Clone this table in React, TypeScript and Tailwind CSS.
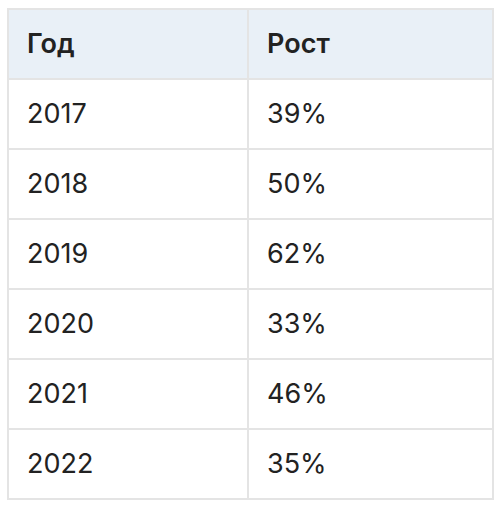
import React from 'react';

const rows = [
  ['2017', '39%'],
  ['2018', '50%'],
  ['2019', '62%'],
  ['2020', '33%'],
  ['2021', '46%'],
  ['2022', '35%'],
];

export default function App() {
  return (
    <div className="min-h-screen bg-white pl-[7px] pt-[8px] font-['Inter',sans-serif] text-[27px] text-[#222222]">
      <table className="w-[487px] border-collapse border-2 border-[#e4e4e4]">
        <thead>
          <tr className="bg-[#e9f0f7]">
            <th className="h-[70px] w-[240px] border-2 border-[#e4e4e4] pl-[18px] text-left font-semibold">Год</th>
            <th className="h-[70px] border-2 border-[#e4e4e4] pl-[18px] text-left font-semibold">Рост</th>
          </tr>
        </thead>
        <tbody>
          {rows.map(([year, growth]) => (
            <tr key={year}>
              <td className="h-[70px] border-2 border-[#e4e4e4] pl-[18px]">{year}</td>
              <td className="h-[70px] border-2 border-[#e4e4e4] pl-[18px]">{growth}</td>
            </tr>
          ))}
        </tbody>
      </table>
    </div>
  );
}
